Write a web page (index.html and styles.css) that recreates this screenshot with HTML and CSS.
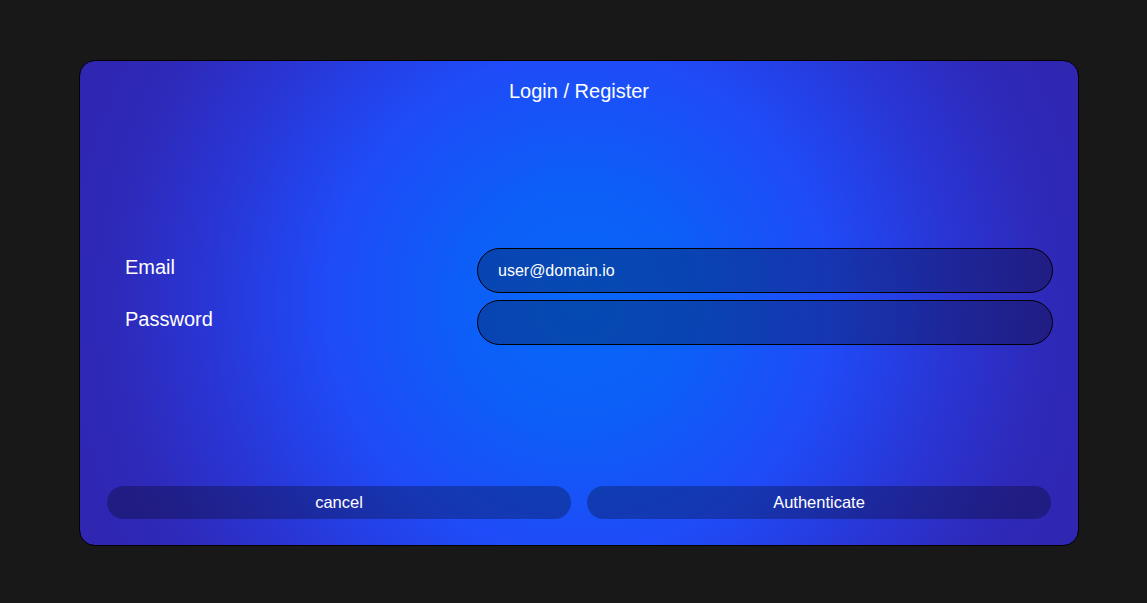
FILE: index.html
```html
<!DOCTYPE html>
<html lang="en">
<head>
<meta charset="utf-8">
<title>Login / Register</title>
<link rel="stylesheet" href="styles.css">
</head>
<body>
  <div class="card">
    <h1 class="title">Login / Register</h1>
    <div class="main">
      <form class="form">
        <label class="label" for="email">Email</label>
        <input class="input" id="email" type="text" value="user@domain.io">
        <label class="label" for="password">Password</label>
        <input class="input" id="password" type="password" value="">
      </form>
    </div>
    <div class="actions">
      <button class="btn" type="button">cancel</button>
      <button class="btn" type="button">Authenticate</button>
    </div>
  </div>
</body>
</html>
```
FILE: styles.css
```css
html, body {
  margin: 0;
  padding: 0;
  background: #181818;
}
body {
  font-family: "Liberation Sans", Arial, sans-serif;
  color: #ffffff;
  padding: 60px 0 0 79px;
}
.card {
  box-sizing: border-box;
  width: 1000px;
  height: 486px;
  border: 1px solid #000;
  border-radius: 16px;
  background: radial-gradient(circle at 50% 50%, #0867f8 0, #0d5ef8 120px, #1f4bf8 250px, #2a34d2 380px, #2e29b8 470px, #3025b0 560px);
  display: flex;
  flex-direction: column;
  padding: 19px 27px 26px 27px;
}
.title {
  margin: 0;
  font-size: 20px;
  font-weight: normal;
  line-height: 23px;
  text-align: center;
}
.main {
  flex: 1;
  display: flex;
  align-items: center;
  padding-top: 4px;
}
.form {
  flex: 1;
  display: grid;
  grid-template-columns: 352px 1fr;
  row-gap: 7px;
  align-items: center;
  margin: 0 -2px 0 18px;
}
.label {
  font-size: 20px;
  line-height: 23px;
  margin-bottom: 6px;
}
.input {
  box-sizing: border-box;
  height: 45px;
  width: 100%;
  border: 1px solid #000;
  border-radius: 23px;
  background: rgba(0, 0, 0, 0.28);
  color: #fff;
  font-family: "Liberation Sans", Arial, sans-serif;
  font-size: 16px;
  padding: 0 20px;
  outline: none;
}
.actions {
  display: grid;
  grid-template-columns: 1fr 1fr;
  column-gap: 16px;
}
.btn {
  height: 33px;
  border: none;
  border-radius: 17px;
  background: rgba(0, 0, 0, 0.28);
  color: #fff;
  font-family: "Liberation Sans", Arial, sans-serif;
  font-size: 16.5px;
  padding: 0;
}
```
